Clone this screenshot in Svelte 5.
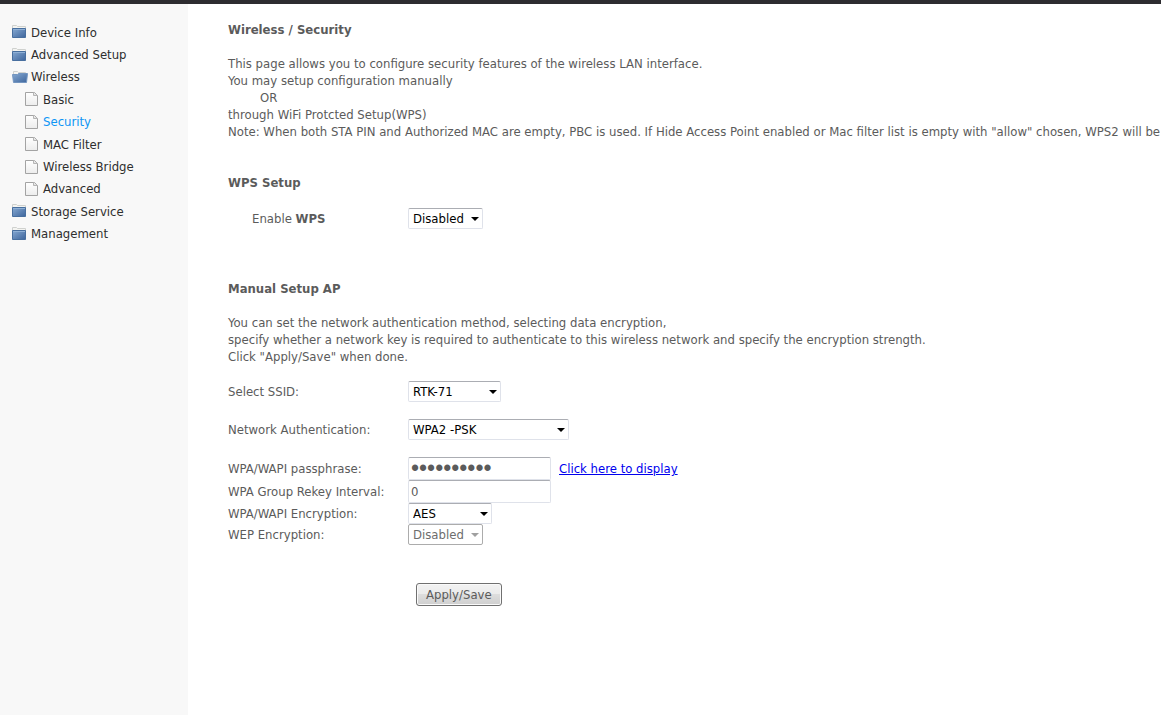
<script>
  const menu = [
    { label: "Device Info", icon: "folder" },
    { label: "Advanced Setup", icon: "folder" },
    { label: "Wireless", icon: "open" },
    { label: "Basic", icon: "page" },
    { label: "Security", icon: "page" },
    { label: "MAC Filter", icon: "page" },
    { label: "Wireless Bridge", icon: "page" },
    { label: "Advanced", icon: "page" },
    { label: "Storage Service", icon: "folder" },
    { label: "Management", icon: "folder" },
  ];

  let current = "Security";
  let wps = "Disabled";
  let ssid = "RTK-71";
  let auth = "WPA2 -PSK";
  let passphrase = "0123456789";
  let rekey = "0";
  let encryption = "AES";
  let showKey = false;
</script>

<svg class="defs" width="0" height="0" aria-hidden="true">
  <defs>
    <linearGradient id="blue" x1="0" y1="0" x2="1" y2="1">
      <stop offset="0" stop-color="#86a9d2" />
      <stop offset="1" stop-color="#3e659c" />
    </linearGradient>
    <linearGradient id="paper" x1="0" y1="0" x2="0" y2="1">
      <stop offset="0" stop-color="#ffffff" />
      <stop offset="1" stop-color="#ececec" />
    </linearGradient>
  </defs>
</svg>

<div class="page">
  <nav class="sidebar">
    <ul>
      {#each menu as item}
        <li class:child={item.icon === "page"}>
          <a
            href="#{item.label}"
            class:active={item.label === current}
            on:click|preventDefault={() => (current = item.label)}
          >
            {#if item.icon === "page"}
              <svg class="icon" width="16" height="16" viewBox="0 0 16 16">
                <path d="M.5 1.500h9l3 3v10H.5z" fill="url(#paper)" stroke="#a3a3a3" />
                <path d="M8.500 1.500v3h4" fill="#e4e4e4" stroke="#b5b5b5" />
              </svg>
            {:else if item.icon === "open"}
              <svg class="icon" width="16" height="16" viewBox="0 0 16 16">
                <path d="M1.500 11V2.500h4l1 1h7V11z" fill="#f4f4f1" stroke="#cfd1ce" />
                <path d="M.5 5.500h5l1-1h9l-1 9h-13z" fill="url(#blue)" stroke="#7395c0" />
              </svg>
            {:else}
              <svg class="icon" width="16" height="16" viewBox="0 0 16 16">
                <path d="M.5 12V1.500h4l1 1h8V12z" fill="#f4f4f1" stroke="#cfd1ce" />
                <path d="M.5 4.500h13v9H.5z" fill="url(#blue)" stroke="#486f9f" />
                <path d="M1 5.500h12" stroke="#8fb0d6" />
              </svg>
            {/if}
            <span>{item.label}</span>
          </a>
        </li>
      {/each}
    </ul>
  </nav>

  <main>
    <h1>Wireless / Security</h1>
    <p>
      This page allows you to configure security features of the wireless LAN interface.<br />
      You may setup configuration manually<br />
      <span class="or">OR</span><br />
      through WiFi Protcted Setup(WPS)<br />
      Note: When both STA PIN and Authorized MAC are empty, PBC is used. If Hide Access Point enabled or Mac filter list is empty with "allow" chosen, WPS2 will be disabled
    </p>

    <h2>WPS Setup</h2>
    <div class="row wps">
      <label for="wps">Enable <b>WPS</b></label>
      <span class="select short">
        <select id="wps" bind:value={wps}>
          <option>Enabled</option>
          <option>Disabled</option>
        </select>
      </span>
    </div>

    <h2>Manual Setup AP</h2>
    <p class="intro">
      You can set the network authentication method, selecting data encryption,<br />
      specify whether a network key is required to authenticate to this wireless network and specify the encryption strength.<br />
      Click "Apply/Save" when done.
    </p>

    <form on:submit|preventDefault>
      <div class="row spaced">
        <label for="ssid">Select SSID:</label>
        <span class="select ssid">
          <select id="ssid" bind:value={ssid}>
            <option>RTK-71</option>
          </select>
        </span>
      </div>
      <div class="row spaced">
        <label for="auth">Network Authentication:</label>
        <span class="select auth">
          <select id="auth" bind:value={auth}>
            <option>Open</option>
            <option>WPA2 -PSK</option>
          </select>
        </span>
      </div>
      <div class="row">
        <label for="passphrase">WPA/WAPI passphrase:</label>
        <input
          id="passphrase"
          type={showKey ? "text" : "password"}
          value={passphrase}
          on:input={(e) => (passphrase = e.target.value)}
        />
        <a class="display" href="#display" on:click|preventDefault={() => (showKey = !showKey)}>Click here to display</a>
      </div>
      <div class="row">
        <label for="rekey">WPA Group Rekey Interval:</label>
        <input id="rekey" type="text" bind:value={rekey} />
      </div>
      <div class="row">
        <label for="encryption">WPA/WAPI Encryption:</label>
        <span class="select aes">
          <select id="encryption" bind:value={encryption}>
            <option>AES</option>
            <option>TKIP+AES</option>
          </select>
        </span>
      </div>
      <div class="row">
        <label for="wep">WEP Encryption:</label>
        <span class="select short disabled">
          <select id="wep" disabled>
            <option>Disabled</option>
          </select>
        </span>
      </div>
      <button type="submit">Apply/Save</button>
    </form>
  </main>
</div>

<style>
  :global(body) {
    background: #fff;
  }

  .defs {
    position: absolute;
  }

  .page {
    display: flex;
    min-height: 100vh;
    box-sizing: border-box;
    border-top: 4px solid #2d2c30;
    color: #5b5b5b;
    font-family: "DejaVu Sans Condensed", "DejaVu Sans", Tahoma, sans-serif;
    font-stretch: condensed;
    font-size: 13px;
    line-height: 17px;
  }

  .sidebar {
    flex: 0 0 188px;
    background: #f8f8f8;
  }

  .sidebar ul {
    display: grid;
    grid-auto-rows: 1fr;
    height: 224px;
    margin: 0;
    padding: 17px 0 0 12px;
    list-style: none;
  }

  .sidebar li {
    display: flex;
    align-items: center;
  }

  .sidebar .child {
    padding-left: 13px;
  }

  .sidebar a {
    display: flex;
    align-items: center;
    gap: 3px;
    color: #2e2e2e;
    text-decoration: none;
  }

  .sidebar .child a {
    gap: 2px;
  }

  .sidebar a.active {
    color: #0d95f5;
  }

  main {
    flex: 1;
    min-width: 0;
    padding: 17px 0 0 40px;
    white-space: nowrap;
    overflow: hidden;
  }

  h1,
  h2 {
    margin: 0 0 17px;
    font-size: 13px;
    line-height: 17px;
  }

  p {
    margin: 0 0 34px;
  }

  .intro {
    margin-bottom: 16px;
  }

  .or {
    padding-left: 32px;
  }

  .row {
    display: flex;
    align-items: center;
  }

  .row label {
    flex: 0 0 180px;
  }

  .wps {
    margin-bottom: 51px;
  }

  .wps label {
    box-sizing: border-box;
    padding-left: 24px;
  }

  .spaced {
    margin-bottom: 17px;
  }

  .select {
    position: relative;
  }

  .select::after {
    content: "";
    position: absolute;
    top: 9px;
    right: 4px;
    border: 4px solid transparent;
    border-top-color: #000;
    border-bottom: 0;
    pointer-events: none;
  }

  select,
  input {
    display: block;
    box-sizing: border-box;
    margin: 0;
    border: 1px solid #dfe2ea;
    border-top-color: #abadb3;
    border-radius: 2px;
    background: #fff;
    font: inherit;
  }

  select {
    appearance: none;
    width: 100%;
    height: 21px;
    padding: 0 4px;
    color: #000;
  }

  .short {
    width: 75px;
  }

  .ssid {
    width: 93px;
  }

  .auth {
    width: 161px;
  }

  .aes {
    width: 84px;
  }

  .disabled select {
    border-color: #acacac;
    color: #6d6d6d;
    opacity: 1;
  }

  .disabled::after {
    border-top-color: #a0a0a0;
  }

  input {
    width: 143px;
    height: 23px;
    padding: 0 2px;
    color: #5b5b5b;
  }

  input[type="password"] {
    font-family: "Liberation Sans", Arial, sans-serif;
    font-size: 23px;
  }

  .display {
    margin-left: 8px;
    color: #0000ee;
  }

  button {
    display: block;
    height: 23px;
    margin: 38px 0 0 188px;
    padding: 0 9px;
    border: 1px solid #707070;
    border-radius: 3px;
    background: linear-gradient(#f2f2f2, #ebebeb 50%, #dddddd 50%, #cfcfcf);
    box-shadow: inset 0 0 0 1px #fafafa;
    color: #5b5b5b;
    font: inherit;
  }
</style>
